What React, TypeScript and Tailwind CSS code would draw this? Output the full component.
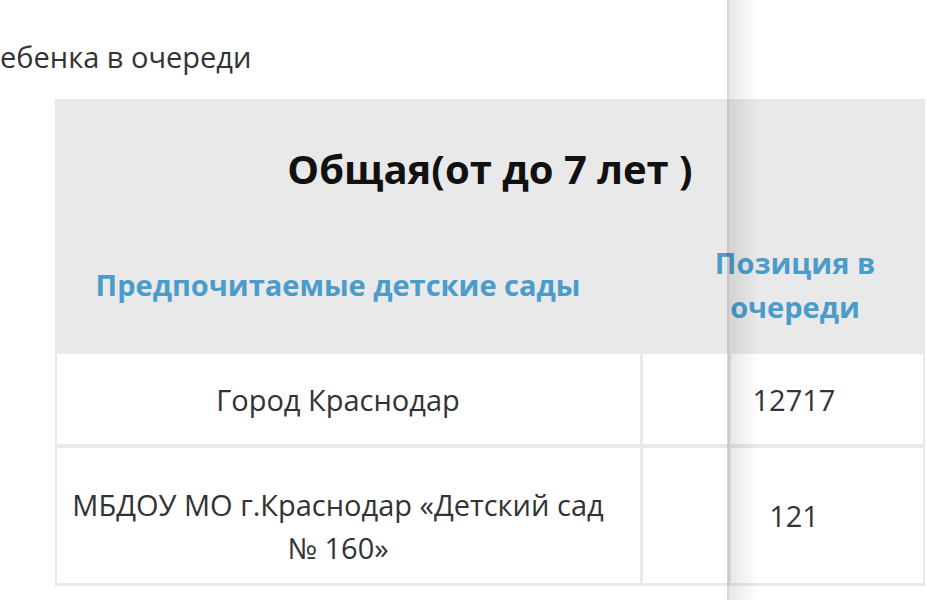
import React from "react";

export default function App() {
  const font = { fontFamily: '"Open Sans", "Noto Sans", sans-serif' };
  return (
    <div className="relative h-[600px] w-[927px] overflow-hidden bg-white" style={font}>
      <div className="pt-[36px] text-[29px] leading-[42px] text-[#333333] whitespace-nowrap">
        ебенка в очереди
      </div>

      <div className="mt-[21px] ml-[55px] w-[870px] bg-[#e9e9e9] px-[2px] pb-[3px]">
        {/* header */}
        <div className="flex h-[140px] items-center justify-center">
          <span className="text-[40px] font-bold leading-none text-[#111111] whitespace-nowrap">
            Общая(от до 7 лет )
          </span>
        </div>
        <div className="grid h-[92px] grid-cols-[583px_85px_192px] gap-x-[3px] items-center">
          <div className="pr-[21px] text-center text-[29px] font-bold leading-[44px] text-[#4a9ccb] whitespace-nowrap">
            Предпочитаемые детские сады
          </div>
          <div className="col-span-2 pl-[24px] text-center text-[29px] font-bold leading-[44px] text-[#4a9ccb] whitespace-nowrap">
            Позиция в
            <br />
            очереди
          </div>
        </div>
        <div className="h-[23px]" />

        {/* body */}
        <div className="grid grid-cols-[583px_85px_192px] gap-x-[3px] gap-y-[4px] text-[29px] leading-[43px] text-[#333333]">
          <div className="flex h-[90px] items-center justify-center bg-white pr-[21px] whitespace-nowrap">
            Город Краснодар
          </div>
          <div className="h-[90px] bg-white" />
          <div className="flex h-[90px] items-center justify-center bg-white pr-[66px]">12717</div>

          <div className="flex h-[135px] items-center justify-center bg-white pr-[21px] pt-[20px] text-center whitespace-nowrap">
            <span>
              МБДОУ МО г.Краснодар «Детский сад
              <br />
              № 160»
            </span>
          </div>
          <div className="h-[135px] bg-white" />
          <div className="flex h-[135px] items-center justify-center bg-white pr-[66px]">121</div>
        </div>
      </div>

      {/* scroll shadow overlay */}
      <div className="pointer-events-none absolute left-[727px] top-0 h-full w-[32px] bg-gradient-to-r from-[rgba(0,0,0,0.1)] to-transparent">
        <div className="h-full w-[2px] bg-[rgba(0,0,0,0.06)]" />
      </div>
    </div>
  );
}
